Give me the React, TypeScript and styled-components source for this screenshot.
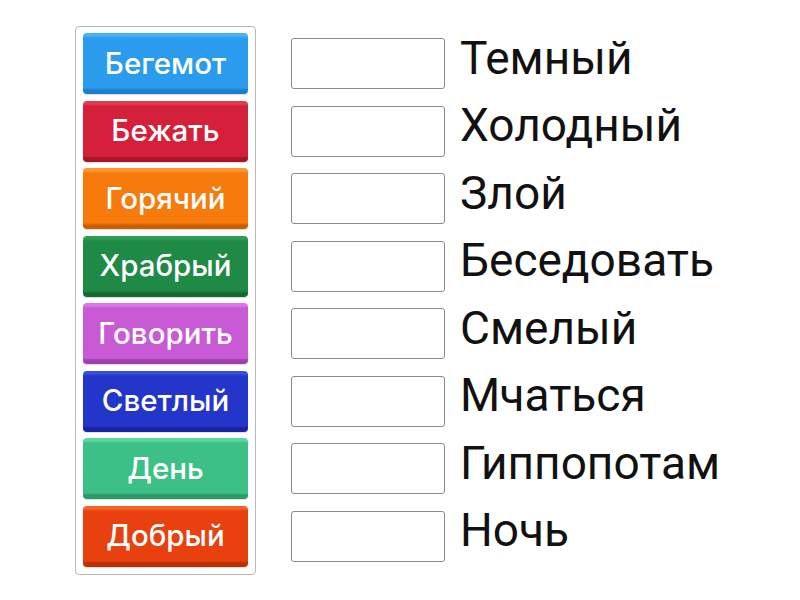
import styled, { createGlobalStyle } from "styled-components";

const GlobalStyle = createGlobalStyle`
  body {
    margin: 0;
    background: #fff;
    font-family: Roboto, "Liberation Sans", sans-serif;
  }
`;

const words = [
  { text: "Бегемот", color: "#2b9bee", light: "#46b2f6", dark: "#1c7dcc" },
  { text: "Бежать", color: "#d5203b", light: "#e43a52", dark: "#a8142a" },
  { text: "Горячий", color: "#f67a0c", light: "#fb9633", dark: "#cc5e00" },
  { text: "Храбрый", color: "#1f8a45", light: "#2c9e55", dark: "#146a33" },
  { text: "Говорить", color: "#c85ad5", light: "#dc75e8", dark: "#a23fae" },
  { text: "Светлый", color: "#2435c9", light: "#3a4ede", dark: "#1823a0" },
  { text: "День", color: "#3dbf88", light: "#5cd59f", dark: "#2a9a6a" },
  { text: "Добрый", color: "#e8400f", light: "#f6622e", dark: "#bd2f05" },
];

const targets = [
  "Темный",
  "Холодный",
  "Злой",
  "Беседовать",
  "Смелый",
  "Мчаться",
  "Гиппопотам",
  "Ночь",
];

//Page layout
function App() {
  return (
    <>
      <GlobalStyle />
      <Page>
        <Panel>
          {words.map((w) => (
            <Tile key={w.text} color={w.color} light={w.light} dark={w.dark}>
              {w.text}
            </Tile>
          ))}
        </Panel>
        <Targets>
          {targets.map((t) => (
            <Row key={t}>
              <DropBox />
              <Label>{t}</Label>
            </Row>
          ))}
        </Targets>
      </Page>
    </>
  );
}

const Page = styled.div`
  display: flex;
  align-items: flex-start;
  padding: 26px 0 0 75px;
  width: 800px;
  height: 600px;
  box-sizing: border-box;
`;

const Panel = styled.div`
  display: flex;
  flex-direction: column;
  gap: 6.5px;
  padding: 6px 7px 7px;
  width: 181px;
  box-sizing: border-box;
  border: 1px solid #b8b8b8;
  border-radius: 4px;
`;

const Tile = styled.div<{ color: string; light: string; dark: string }>`
  display: flex;
  align-items: center;
  justify-content: center;
  height: 61px;
  padding-bottom: 2px;
  box-sizing: border-box;
  border-radius: 4px;
  color: #fff;
  font-family: Inter, Roboto, sans-serif;
  font-size: 29.5px;
  font-weight: 500;
  background: ${(p) =>
    `linear-gradient(${p.light} 0, ${p.light} 3px, ${p.color} 5px, ${p.color} calc(100% - 6px), ${p.dark} calc(100% - 4px))`};
  box-shadow: 0 1px 1px rgba(0, 0, 0, 0.15);
`;

const Targets = styled.div`
  display: flex;
  flex-direction: column;
  gap: 16.5px;
  margin: 12px 0 0 35px;
`;

const Row = styled.div`
  display: flex;
  align-items: center;
  height: 51px;
`;

const DropBox = styled.div`
  width: 154px;
  height: 51px;
  box-sizing: border-box;
  border: 1px solid #8a8a8a;
  border-radius: 3px;
  background: #fff;
`;

const Label = styled.div`
  margin: -12px 0 0 15px;
  font-size: 46px;
  color: #111;
  white-space: nowrap;
`;

export default App;
